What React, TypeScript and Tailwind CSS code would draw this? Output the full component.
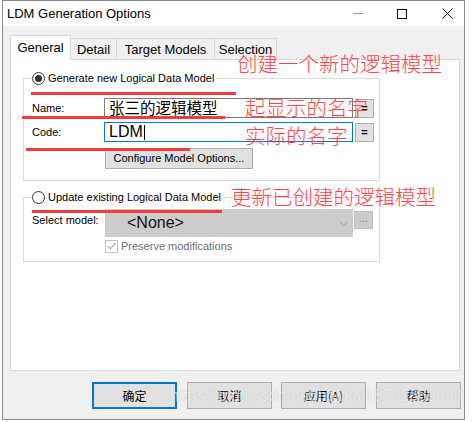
import React from 'react';

const sans = "font-['Liberation_Sans',Arial,sans-serif]";
const cjk = "font-['Noto_Sans_CJK_SC',sans-serif]";

function EqButton() {
  return (
    <div className="ml-[2px] flex h-[19px] w-[19px] items-center justify-center border border-[#adadad] bg-[#e1e1e1] text-[11px] font-bold leading-none text-black">
      =
    </div>
  );
}

function Radio({ checked }: { checked?: boolean }) {
  return (
    <span className="flex h-[13px] w-[13px] items-center justify-center rounded-full border border-[#333333] bg-white">
      {checked && <span className="h-[7px] w-[7px] rounded-full bg-[#333333]" />}
    </span>
  );
}

function Tab({ label, active, w }: { label: string; active?: boolean; w: string }) {
  if (active) {
    return (
      <div className={`relative z-10 flex h-[25px] items-center justify-center border-l border-r border-t border-[#d9d9d9] bg-white pb-[1px] text-[13px] ${w}`}>
        {label}
      </div>
    );
  }
  return (
    <div className={`-ml-px flex h-[22px] items-center justify-center border-l border-r border-t border-[#d9d9d9] bg-[#f0f0f0] text-[13px] ${w}`}>
      {label}
    </div>
  );
}

function DlgButton({ label, primary, cls }: { label: string; primary?: boolean; cls?: string }) {
  return (
    <div
      className={`flex h-[27px] w-[85px] items-center justify-center bg-[#e1e1e1] text-[12px] text-black ${cjk} ${
        primary ? 'border-2 border-[#0078d7]' : 'border border-[#adadad]'
      } ${cls ?? ''}`}
    >
      {label}
    </div>
  );
}

export default function App() {
  return (
    <div className={`relative h-[422px] w-[472px] overflow-hidden bg-white text-black ${sans}`}>
      <div className="ml-[2px] flex h-[420px] w-[463px] flex-col border border-[#8a8a8a]">
        {/* title bar */}
        <div className="flex h-[25px] shrink-0 items-center bg-white pl-[4px]">
          <span className="text-[13px] leading-none">LDM Generation Options</span>
          <div className="ml-auto flex items-center pr-[11px]">
            <div className="h-px w-[10px] bg-[#9a9a9a]" />
            <div className="ml-[34px] h-[10px] w-[10px] border border-black" />
            <svg className="ml-[35px]" width="11" height="11" viewBox="0 0 11 11">
              <path d="M0.5 0.5 L10.5 10.5 M10.5 0.5 L0.5 10.5" stroke="#000" strokeWidth="1" />
            </svg>
          </div>
        </div>

        {/* body */}
        <div className="flex flex-1 flex-col bg-[#f0f0f0] pt-[9px]">
          <div className="flex items-end pl-[7px]">
            <Tab label="General" active w="w-[61px]" />
            <Tab label="Detail" w="w-[47px]" />
            <Tab label="Target Models" w="w-[99px]" />
            <Tab label="Selection" w="w-[63px]" />
          </div>

          <div className="-mt-px ml-[7px] h-[312px] w-[450px] border border-[#d9d9d9] bg-white text-[11px]">
            {/* group 1 */}
            <fieldset className="ml-[12px] mt-[11px] h-[110px] w-[357px] border border-[#dcdcdc]">
              <legend className="ml-[8px] flex h-[14px] items-center gap-[3px] pr-[2px]">
                <Radio checked />
                <span className="leading-[14px]">Generate new Logical Data Model</span>
              </legend>
              <div className="mt-[13px] flex items-center pl-[8px]">
                <span className="w-[72px]">Name:</span>
                <div className={`flex h-[20px] w-[249px] items-center border border-[#7a7a7a] bg-white pl-[4px] text-[15.5px] leading-none ${cjk}`}>
                  张三的逻辑模型
                </div>
                <EqButton />
              </div>
              <div className="mt-[4px] flex items-center pl-[8px]">
                <span className="w-[72px]">Code:</span>
                <div className="flex h-[20px] w-[249px] items-center border border-[#0078d7] bg-white pl-[4px] text-[16px] leading-none">
                  LDM
                  <span className="ml-[1px] h-[15px] w-px bg-black" />
                </div>
                <EqButton />
              </div>
              <div className="mt-[6px] pl-[81px]">
                <div className="flex h-[21px] w-[148px] items-center justify-center border border-[#adadad] bg-[#e1e1e1]">
                  Configure Model Options...
                </div>
              </div>
            </fieldset>

            {/* group 2 */}
            <fieldset className="ml-[12px] mt-[9px] h-[72px] w-[357px] border border-[#dcdcdc]">
              <legend className="ml-[8px] flex h-[14px] items-center gap-[3px] pr-[2px]">
                <Radio />
                <span className="leading-[14px]">Update existing Logical Data Model</span>
              </legend>
              <div className="mt-[5px] flex items-start pl-[8px]">
                <span className="w-[73px] pt-[4px] leading-[14px]">Select model:</span>
                <div className="flex h-[28px] w-[248px] items-center bg-[#cccccc] pl-[22px] pr-[5px] text-[16px] text-[#111111]">
                  <span>&lt;None&gt;</span>
                  <svg className="ml-auto" width="9" height="5" viewBox="0 0 9 5">
                    <path d="M0.5 0.5 L4.5 4.5 L8.5 0.5" fill="none" stroke="#a3a3a3" strokeWidth="1" />
                  </svg>
                </div>
                <div className="ml-[1px] mt-[2px] flex h-[18px] w-[19px] items-center justify-center border border-[#bfbfbf] bg-[#cccccc] pb-[4px] text-[10px] text-[#7a7a7a]">
                  ...
                </div>
              </div>
              <div className="mt-[1px] flex items-center pl-[81px]">
                <div className="flex h-[13px] w-[13px] items-center justify-center border border-[#c4c4c4] bg-white">
                  <svg width="9" height="8" viewBox="0 0 9 8">
                    <path d="M0.5 4 L3.3 6.8 L8.5 0.8" fill="none" stroke="#bcbcbc" strokeWidth="1.3" />
                  </svg>
                </div>
                <span className="ml-[3px] text-[#6d6d6d]">Preserve modifications</span>
              </div>
            </fieldset>
          </div>

          {/* buttons */}
          <div className="mt-[11px] flex pl-[89px]">
            <DlgButton label="确定" primary />
            <DlgButton label="取消" cls="ml-[10px]" />
            <DlgButton label="应用(A)" cls="ml-[9px]" />
            <DlgButton label="帮助" cls="ml-[10px]" />
          </div>
        </div>
      </div>

      {/* red annotations */}
      <div className="absolute left-[31px] top-[92px] h-[3px] w-[205px] bg-[#f33b3b]" />
      <div className="absolute left-[22px] top-[116px] h-[3px] w-[203px] bg-[#f33b3b]" />
      <div className="absolute left-[26px] top-[148px] h-[3px] w-[164px] bg-[#f33b3b]" />
      <div className="absolute left-[32px] top-[210px] h-[3px] w-[190px] bg-[#f33b3b]" />

      <div className={`absolute left-[237px] top-[53px] text-[20.5px] font-light leading-[20px] text-[#ff4646] ${cjk}`}>
        创建一个新的逻辑模型
      </div>
      <div className={`absolute left-[245px] top-[97px] text-[20.5px] font-light leading-[20px] text-[#ff4646] ${cjk}`}>
        起显示的名字
      </div>
      <div className={`absolute left-[245px] top-[125px] text-[20.5px] font-light leading-[20px] text-[#ff4646] ${cjk}`}>
        实际的名字
      </div>
      <div className={`absolute left-[231px] top-[186px] text-[20.5px] font-light leading-[20px] text-[#ff4646] ${cjk}`}>
        更新已创建的逻辑模型
      </div>

      {/* watermark */}
      <div className="absolute left-[170px] top-[387px] text-[16px] leading-[18px] text-[#f2f2f2] opacity-60 [text-shadow:0_0_1px_#a0a0a0]">
        https://blog.csdn.net/houkai18792669930
      </div>
    </div>
  );
}
